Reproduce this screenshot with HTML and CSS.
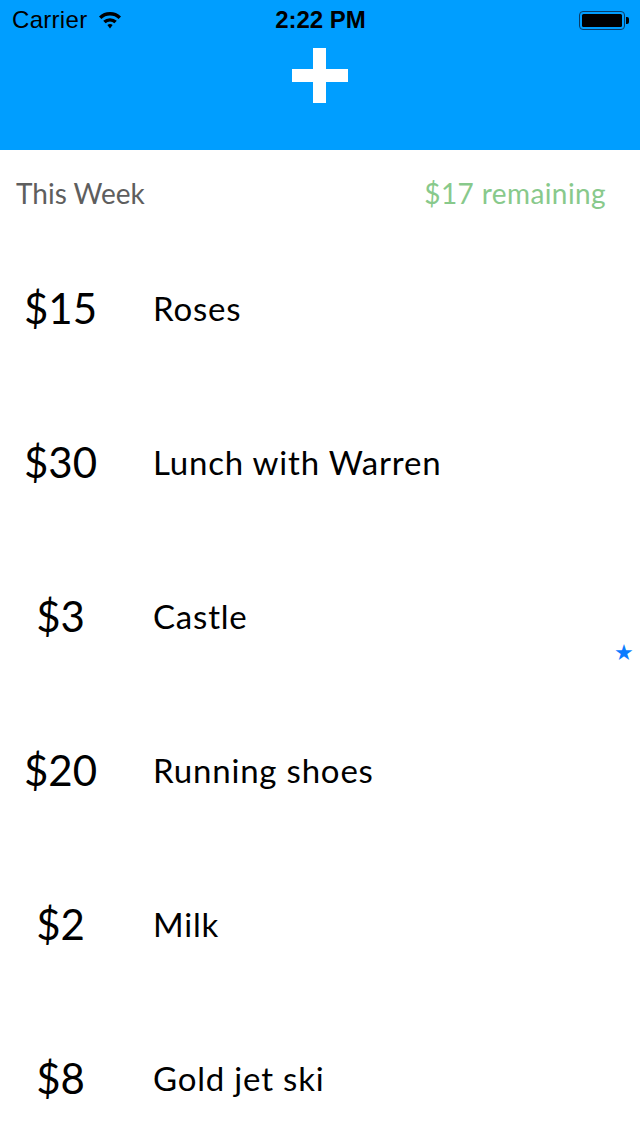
FILE: index.html
```html
<!DOCTYPE html>
<html>
<head>
<meta charset="utf-8">
<link rel="stylesheet" href="styles.css">
</head>
<body>
<div class="app">
  <header class="topbar">
    <div class="status">
      <div class="status-left">
        <span class="carrier">Carrier</span>
        <svg class="wifi" width="24" height="19" viewBox="0 0 24 19">
          <path d="M1 6.5 A16 16 0 0 1 23 6.5 L20.6 9 A12.6 12.6 0 0 0 3.4 9 Z" fill="#000"/>
          <path d="M5.2 10.8 A10.2 10.2 0 0 1 18.8 10.8 L16.4 13.2 A6.8 6.8 0 0 0 7.6 13.2 Z" fill="#000"/>
          <path d="M9.4 15 A4 4 0 0 1 14.6 15 L12 18.5 Z" fill="#000"/>
        </svg>
      </div>
      <div class="time">2:22 PM</div>
      <div class="status-right">
        <div class="battery"><div class="battery-fill"></div></div>
        <div class="battery-nub"></div>
      </div>
    </div>
    <div class="add-wrap">
      <div class="plus" aria-label="Add"></div>
    </div>
  </header>

  <section class="summary">
    <span class="week">This Week</span>
    <span class="remaining">$17 remaining</span>
  </section>

  <ul class="list">
    <li class="row"><span class="amount">$15</span><span class="name">Roses</span></li>
    <li class="row"><span class="amount">$30</span><span class="name">Lunch with Warren</span></li>
    <li class="row"><span class="amount">$3</span><span class="name">Castle</span><span class="star">★</span></li>
    <li class="row"><span class="amount">$20</span><span class="name">Running shoes</span></li>
    <li class="row"><span class="amount">$2</span><span class="name">Milk</span></li>
    <li class="row"><span class="amount">$8</span><span class="name">Gold jet ski</span></li>
  </ul>
</div>
</body>
</html>
```

FILE: styles.css
```css
* { box-sizing: border-box; }
html, body { margin: 0; padding: 0; background: #fff; }
body { width: 640px; height: 1136px; overflow: hidden; font-family: Lato, "Open Sans", sans-serif; font-weight: 400; }
.app { width: 640px; height: 1136px; overflow: hidden; }

.topbar { background: #009eff; height: 150px; display: flex; flex-direction: column; }
.status { height: 40px; display: flex; align-items: center; justify-content: space-between; padding: 0 11px 0 12px; font-family: "Liberation Sans", Arial, sans-serif; font-weight: 400; color: #000; }
.status-left { display: flex; align-items: center; gap: 11px; width: 200px; }
.carrier { font-size: 24px; line-height: 40px; letter-spacing: 0.3px; }
.wifi { margin-top: -1px; }
.time { font-size: 24px; font-weight: bold; line-height: 40px; }
.status-right { width: 200px; display: flex; justify-content: flex-end; align-items: center; }
.battery { width: 46px; height: 19px; border: 1.5px solid #0a3c66; border-radius: 4px; padding: 2px; }
.battery-fill { width: 100%; height: 100%; background: #000; border-radius: 1.5px; }
.battery-nub { width: 3px; height: 7px; background: #000; border-radius: 0 2px 2px 0; margin-left: 1px; }

.add-wrap { flex: 1; display: flex; justify-content: center; padding-top: 8px; }
.plus { width: 56px; height: 55px; position: relative; }
.plus::before, .plus::after { content: ""; position: absolute; background: #fff; }
.plus::before { left: 21px; top: 0; width: 13px; height: 55px; }
.plus::after { left: 0; top: 21px; width: 56px; height: 13px; }

.summary { height: 82px; display: flex; justify-content: space-between; align-items: flex-start; padding: 26px 34px 0 16px; font-size: 28px; }
.week { color: #5e5e5e; }
.remaining { color: #88c98b; letter-spacing: 0.4px; }

.list { list-style: none; margin: 0; padding: 0; }
.row { height: 154px; display: flex; align-items: center; position: relative; padding-bottom: 2px; }
.amount { width: 121px; text-align: center; font-size: 42px; color: #000; }
.name { margin-left: 32px; font-size: 33px; color: #000; letter-spacing: 0.8px; }
.star { position: absolute; right: 6px; top: 101px; color: #0a7cff; font-size: 22px; line-height: 1; }
```
